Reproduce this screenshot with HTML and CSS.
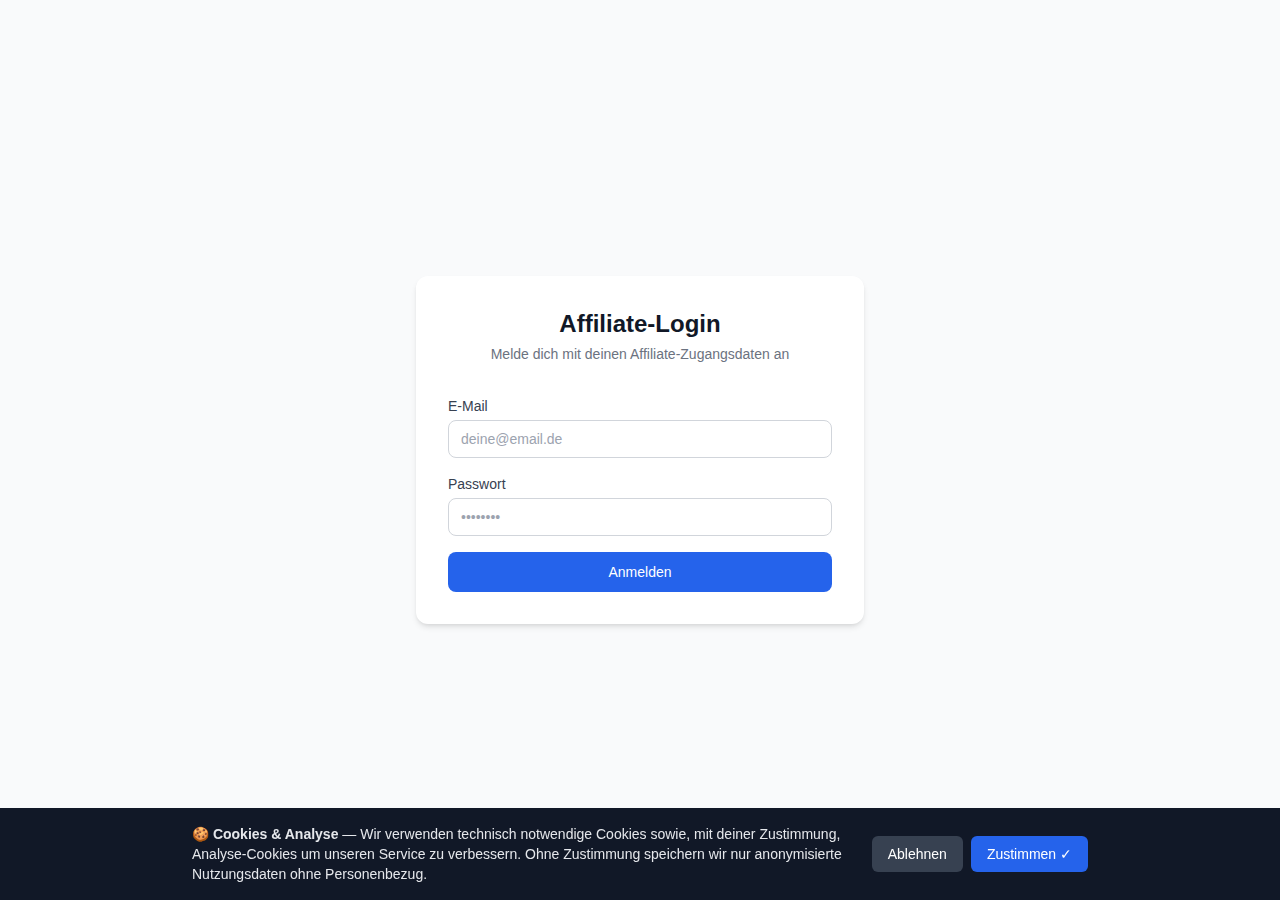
FILE: index.html
```html
<!DOCTYPE html>
<html lang="de">
<head>
    <meta charset="UTF-8">
    <meta name="viewport" content="width=device-width, initial-scale=1.0">
    <title>Affiliate-Login</title>
    <link rel="stylesheet" href="styles.css">
</head>
<body>
    <main class="page">
        <div class="card">
            <div class="card-header">
                <h1>Affiliate-Login</h1>
                <p>Melde dich mit deinen Affiliate-Zugangsdaten an</p>
            </div>
            <form class="login-form">
                <div class="field">
                    <label for="email">E-Mail</label>
                    <input type="email" id="email" placeholder="deine@email.de" required>
                </div>
                <div class="field">
                    <label for="password">Passwort</label>
                    <input type="password" id="password" placeholder="••••••••" required>
                </div>
                <button type="submit" class="btn-submit">Anmelden</button>
            </form>
        </div>
    </main>

    <!-- Cookie-Hinweis -->
    <div class="cookie-banner">
        <div class="cookie-inner">
            <p class="cookie-text"><strong>🍪 Cookies &amp; Analyse</strong> — Wir verwenden technisch notwendige Cookies sowie, mit deiner Zustimmung, Analyse-Cookies um unseren Service zu verbessern. Ohne Zustimmung speichern wir nur anonymisierte Nutzungsdaten ohne Personenbezug.</p>
            <div class="cookie-actions">
                <button type="button" class="btn-decline">Ablehnen</button>
                <button type="button" class="btn-accept">Zustimmen ✓</button>
            </div>
        </div>
    </div>
</body>
</html>
```
FILE: styles.css
```css
* {
    margin: 0;
    padding: 0;
    box-sizing: border-box;
}

body {
    background-color: #f9fafb;
    color: #111827;
    font-family: "Liberation Sans", Arial, sans-serif;
    font-size: 14px;
    line-height: 20px;
}

button,
input {
    font: inherit;
}

button {
    border: none;
    border-radius: 8px;
    color: #ffffff;
    cursor: pointer;
}

.page {
    min-height: 100vh;
    display: flex;
    align-items: center;
    justify-content: center;
    padding: 16px;
}

.card {
    width: 100%;
    max-width: 448px;
    padding: 32px;
    background-color: #ffffff;
    border-radius: 12px;
    box-shadow: 0 4px 6px -1px rgba(0, 0, 0, 0.1), 0 2px 4px -2px rgba(0, 0, 0, 0.1);
}

.card-header {
    margin-bottom: 32px;
    text-align: center;
}

.card-header h1 {
    font-size: 24px;
    line-height: 32px;
}

.card-header p {
    margin-top: 4px;
    color: #6b7280;
}

.login-form {
    display: flex;
    flex-direction: column;
    gap: 16px;
}

.field label {
    display: block;
    margin-bottom: 4px;
    color: #374151;
}

.field input {
    display: block;
    width: 100%;
    padding: 8px 12px;
    border: 1px solid #d1d5db;
    border-radius: 8px;
    background-color: #ffffff;
    color: #111827;
}

.field input::placeholder {
    color: #9ca3af;
}

.field input:focus {
    outline: 2px solid #2563eb;
}

.btn-submit {
    width: 100%;
    padding: 10px 16px;
    background-color: #2563eb;
}

.btn-submit:hover,
.btn-accept:hover {
    background-color: #1d4ed8;
}

/* Cookie-Banner am unteren Rand */
.cookie-banner {
    position: fixed;
    left: 0;
    right: 0;
    bottom: 0;
    padding: 16px;
    background-color: #111827;
    box-shadow: 0 10px 15px -3px rgba(0, 0, 0, 0.1), 0 4px 6px -4px rgba(0, 0, 0, 0.1);
}

.cookie-inner {
    max-width: 896px;
    margin: 0 auto;
    display: flex;
    align-items: center;
    gap: 16px;
}

.cookie-text {
    flex: 1;
    color: #e5e7eb;
}

.cookie-actions {
    display: flex;
    flex-shrink: 0;
    gap: 8px;
}

.cookie-actions button {
    padding: 8px 16px;
    border-radius: 6px;
}

.btn-decline {
    background-color: #374151;
}

.btn-decline:hover {
    background-color: #4b5563;
}

.btn-accept {
    background-color: #2563eb;
}

@media (max-width: 640px) {
    .cookie-inner {
        flex-direction: column;
    }
}
```
